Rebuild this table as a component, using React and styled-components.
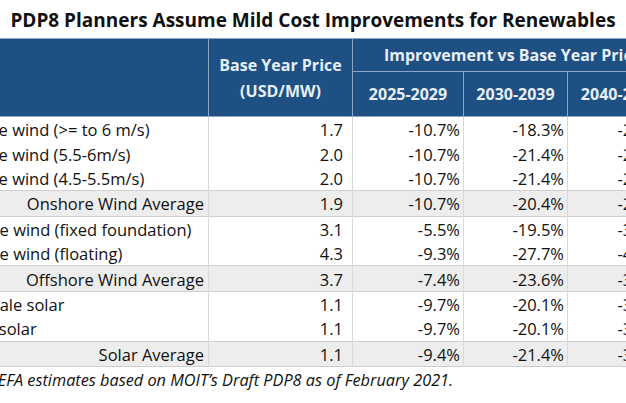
import React from 'react';
import styled, { createGlobalStyle } from 'styled-components';

const GlobalStyle = createGlobalStyle`
  html, body {
    margin: 0;
    padding: 0;
    background: #ffffff;
  }
  body {
    font-family: "Open Sans", "Noto Sans", sans-serif;
    color: #111111;
    overflow: hidden;
  }
`;

const Page = styled.div`
  width: 626px;
  height: 403px;
  overflow: hidden;
  background: #ffffff;
`;

const Title = styled.h1`
  margin: 0;
  height: 38px;
  box-sizing: border-box;
  padding-top: 8px;
  font-size: 19px;
  line-height: 24px;
  font-weight: 700;
  text-align: center;
  color: #111111;
  white-space: nowrap;
`;

const Table = styled.table`
  margin-left: -64px;
  width: 736px;
  border-collapse: collapse;
  table-layout: fixed;
`;

const HeadCell = styled.th`
  background: #1f5083;
  color: #e6eef7;
  font-size: 16px;
  font-weight: 700;
  text-align: center;
  padding: 0 4px;
  border: 1px solid #8aa6c8;
  white-space: nowrap;
  height: ${({ $h }) => $h || 32}px;
  line-height: 26px;
`;

const Row = styled.tr`
  background: ${({ $avg }) => ($avg ? '#ededed' : '#ffffff')};
  border-top: ${({ $avg }) => ($avg ? '1px solid #cfcfcf' : 'none')};
  border-bottom: ${({ $avg }) => ($avg ? '1px solid #cfcfcf' : 'none')};
`;

const Cell = styled.td`
  height: 23.4px;
  padding: 1px ${({ $pad }) => $pad ?? 3}px 0 4px;
  text-indent: ${({ $shift }) => $shift ?? 0}px;
  font-size: 16.5px;
  line-height: 23px;
  text-align: ${({ $align }) => $align || 'right'};
  border-left: 1px solid #d9d9d9;
  border-right: 1px solid #d9d9d9;
  white-space: nowrap;
  overflow: hidden;
  vertical-align: middle;
`;

const Note = styled.p`
  margin: 2px 0 0 -72px;
  font-size: 16.3px;
  line-height: 22px;
  font-style: italic;
  color: #111111;
  white-space: nowrap;
`;

const rows = [
  { name: 'Onshore wind (>= to 6 m/s)', base: '1.7', v: ['-10.7%', '-18.3%', '-24.2%'] },
  { name: 'Onshore wind (5.5-6m/s)', base: '2.0', v: ['-10.7%', '-21.4%', '-27.1%'] },
  { name: 'Onshore wind (4.5-5.5m/s)', base: '2.0', v: ['-10.7%', '-21.4%', '-27.1%'] },
  { name: 'Onshore Wind Average', base: '1.9', v: ['-10.7%', '-20.4%', '-26.1%'], avg: true },
  { name: 'Offshore wind (fixed foundation)', base: '3.1', v: ['-5.5%', '-19.5%', '-32.0%'] },
  { name: 'Offshore wind (floating)', base: '4.3', v: ['-9.3%', '-27.7%', '-42.4%'] },
  { name: 'Offshore Wind Average', base: '3.7', v: ['-7.4%', '-23.6%', '-37.2%'], avg: true },
  { name: 'Utility-scale solar', base: '1.1', v: ['-9.7%', '-20.1%', '-31.6%'], shift: -7 },
  { name: 'Rooftop solar', base: '1.1', v: ['-9.7%', '-20.1%', '-31.6%'], shift: -8 },
  { name: 'Solar Average', base: '1.1', v: ['-9.4%', '-21.4%', '-32.9%'], avg: true },
];

export default function App() {
  return (
    <Page>
      <GlobalStyle />
      <Title>PDP8 Planners Assume Mild Cost Improvements for Renewables</Title>
      <Table>
        <colgroup>
          <col style={{ width: 272 }} />
          <col style={{ width: 144 }} />
          <col style={{ width: 111 }} />
          <col style={{ width: 104 }} />
          <col style={{ width: 105 }} />
        </colgroup>
        <thead>
          <tr>
            <HeadCell rowSpan={2} />
            <HeadCell rowSpan={2}>
              Base Year Price
              <br />
              (USD/MW)
            </HeadCell>
            <HeadCell colSpan={3} $h={32}>Improvement vs Base Year Price</HeadCell>
          </tr>
          <tr>
            <HeadCell $h={44}>2025-2029</HeadCell>
            <HeadCell $h={44}>2030-2039</HeadCell>
            <HeadCell $h={44}>2040-2050</HeadCell>
          </tr>
        </thead>
        <tbody>
          {rows.map((r) => (
            <Row key={r.name} $avg={r.avg}>
              <Cell $align={r.avg ? 'right' : 'left'} $pad={4} $shift={r.shift}>
                {r.name}
              </Cell>
              <Cell $pad={9}>{r.base}</Cell>
              {r.v.map((x, i) => (
                <Cell key={i}>{x}</Cell>
              ))}
            </Row>
          ))}
        </tbody>
      </Table>
      <Note>Source: IEEFA estimates based on MOIT’s Draft PDP8 as of February 2021.</Note>
    </Page>
  );
}
